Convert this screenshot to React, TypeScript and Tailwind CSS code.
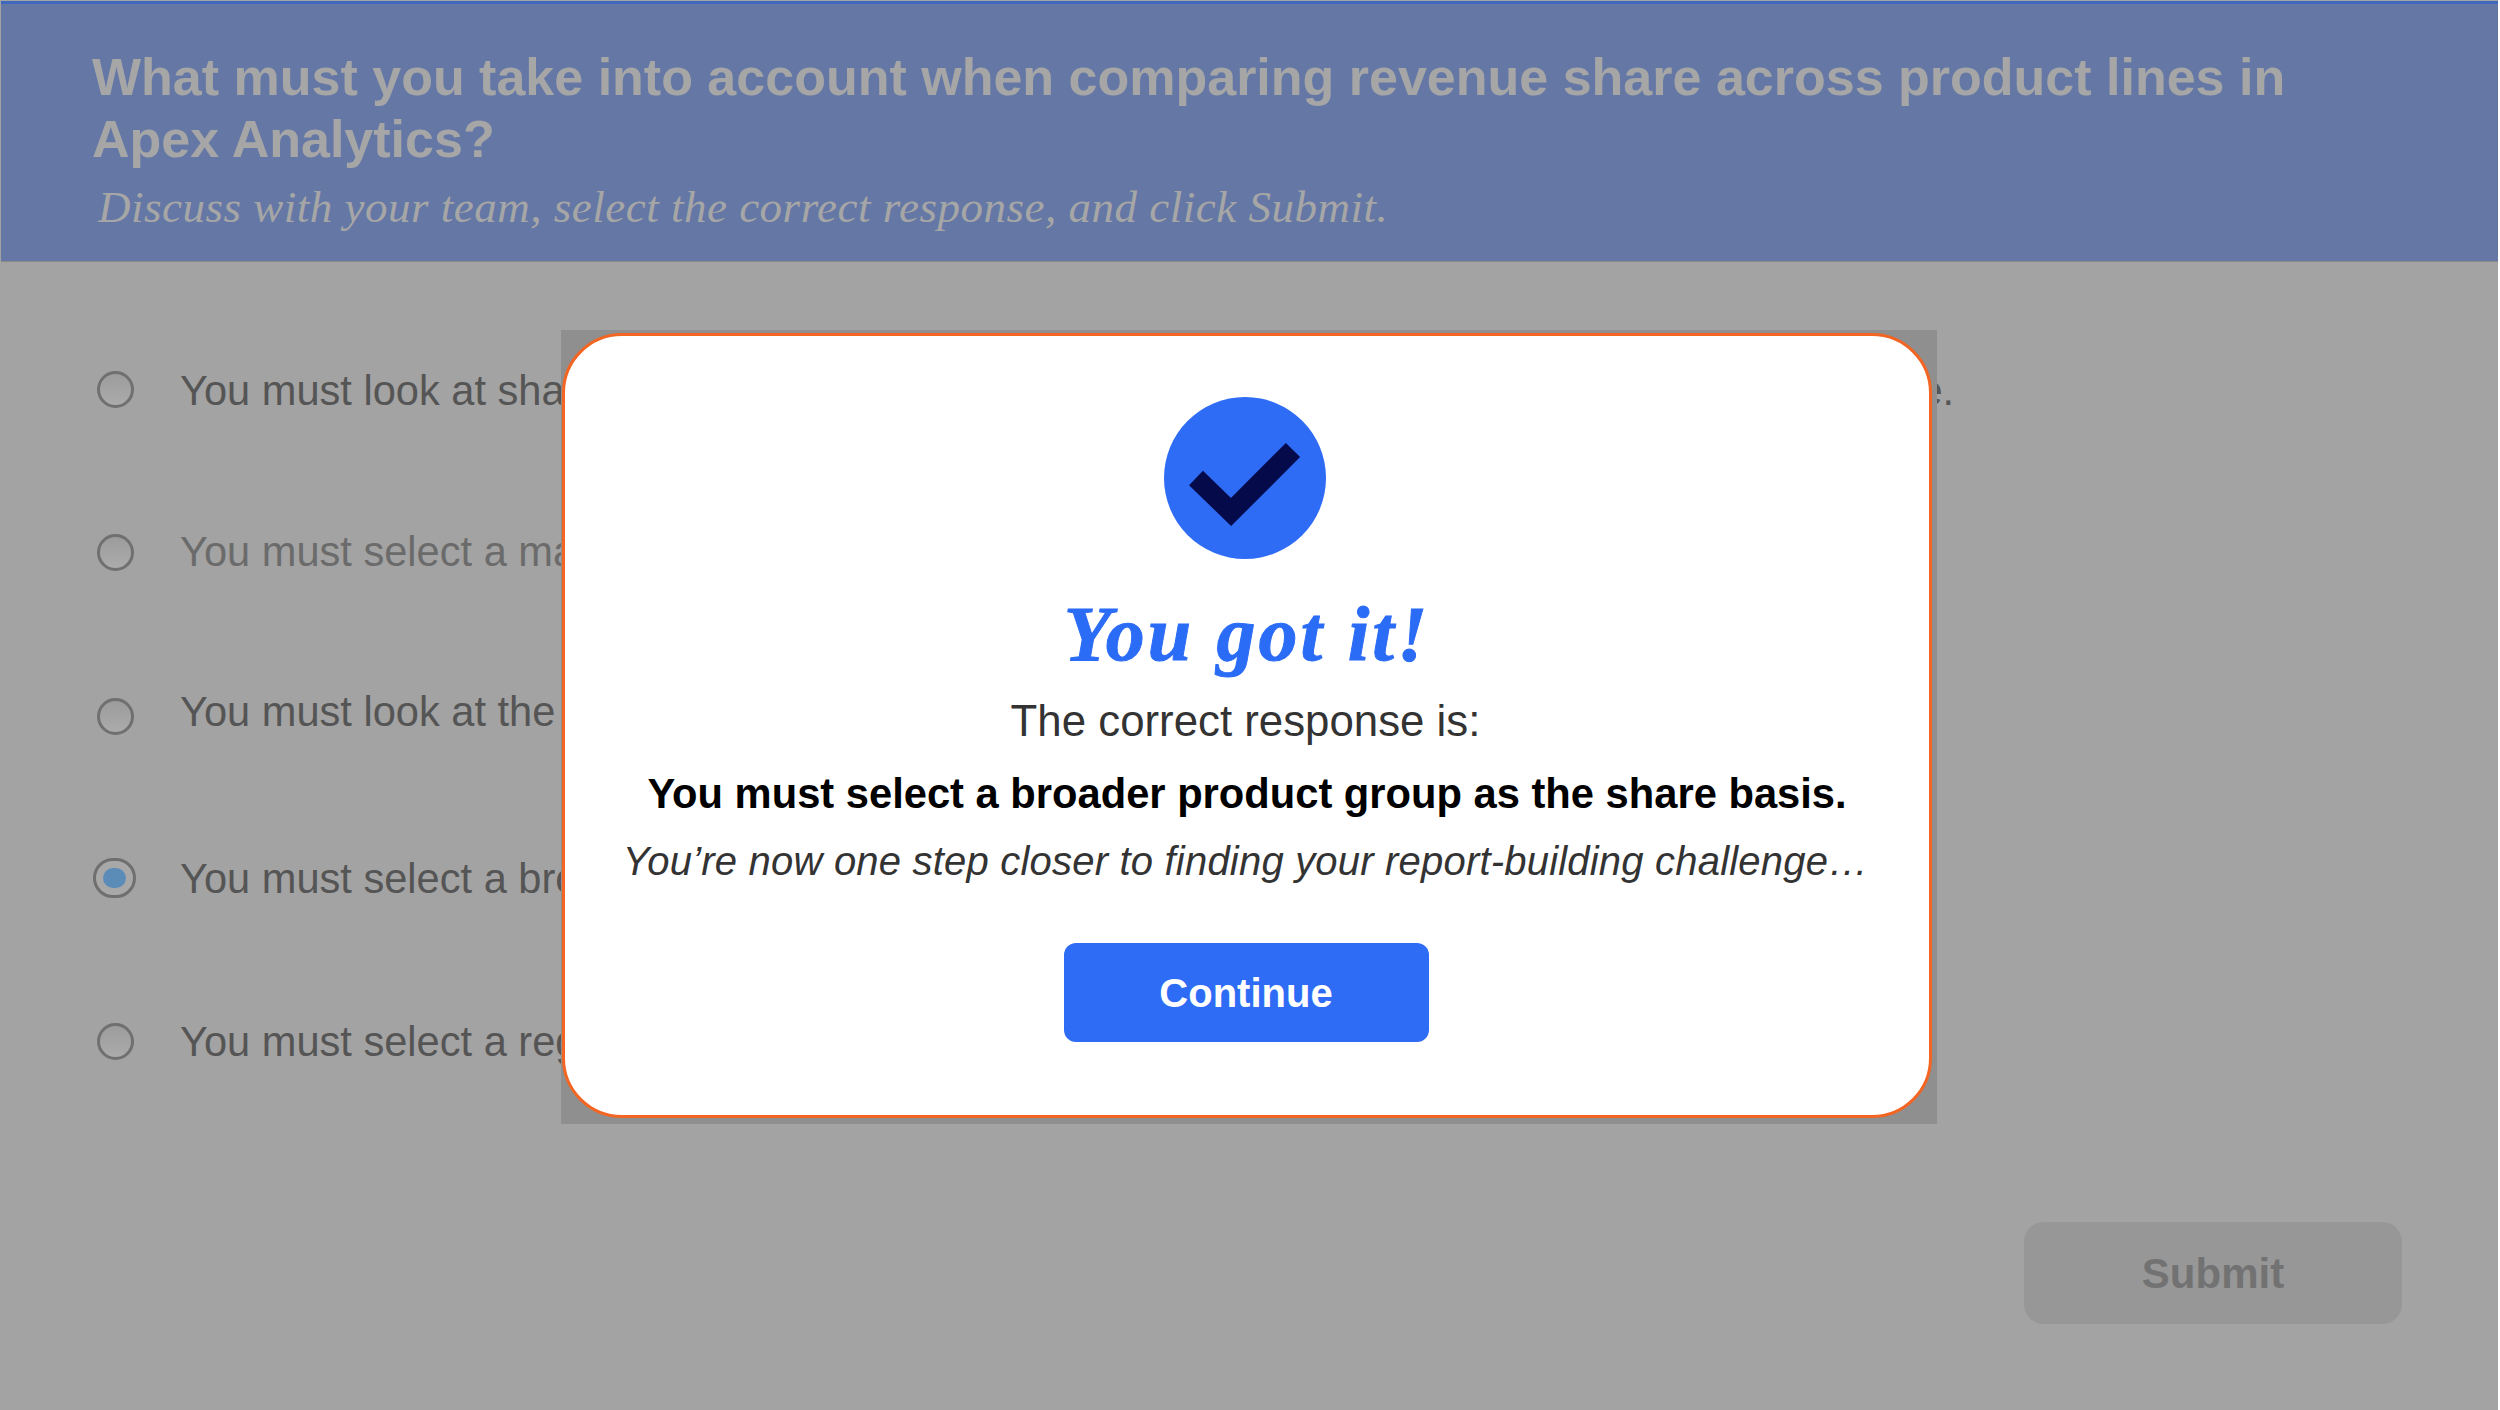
const options = [
  { text: "You must look at share values for each product line across the same time frame and data scope.", row: "mt-[109px]", radio: "-mt-[4px]", tone: "text-[#555555]" },
  { text: "You must select a matching measure and sort the product lines by their highest value.", row: "mt-[121px]", radio: "mt-0", tone: "text-[#6b6b6b]" },
  { text: "You must look at the total revenue for every product line in the report.", row: "mt-[120px]", radio: "mt-[8px]", tone: "text-[#555555]" },
  { text: "You must select a broader product group as the share basis.", row: "mt-[127px]", radio: "-mt-[2px]", tone: "text-[#555555]", selected: true },
  { text: "You must select a regional filter before comparing the share values.", row: "mt-[123px]", radio: "-mt-[2px]", tone: "text-[#555555]" },
];

function Radio({ selected, className }: { selected?: boolean; className: string }) {
  if (selected) {
    return (
      <span className={`flex h-[40px] w-[43px] -ml-[4px] mr-[44px] shrink-0 items-center justify-center rounded-full border-[3px] border-[#6f6f6f] bg-[#a8a8a8] ${className}`}>
        <span className="block h-[20px] w-[23px] rounded-full bg-[#5b8cb8]" />
      </span>
    );
  }
  return (
    <span className={`block h-[37px] w-[37px] mr-[46px] shrink-0 rounded-full border-[3px] border-[#707070] bg-gradient-to-b from-[#9c9c9c] to-[#ababab] ${className}`} />
  );
}

export default function App() {
  return (
    <div className="relative h-[1410px] w-[2500px] overflow-hidden border-r-2 border-white bg-[#a3a3a3] font-['Liberation_Sans',Arial,sans-serif]">
      <div className="ml-px mt-px flex h-[1409px] flex-col">
        <header className="h-[261px] shrink-0 border-t-[3px] border-b-[1px] border-t-[#3f69bd] border-b-[#8a8a8a] bg-[#6578a5] pl-[91px] pt-[42px]">
          <h1 className="w-[2300px] text-[52px] font-bold leading-[62px] text-[#a6a6a6]">
            What must you take into account when comparing revenue share across product lines in Apex Analytics?
          </h1>
          <p className="mt-[12px] ml-[6px] font-['Liberation_Serif',serif] text-[45px] italic leading-[50px] tracking-[0.5px] text-[#a6a6a6]">
            Discuss with your team, select the correct response, and click Submit.
          </p>
        </header>

        <main className="flex-1 pl-[96px]">
          {options.map((o) => (
            <div key={o.text} className={`flex h-[40px] items-center ${o.row}`}>
              <Radio selected={o.selected} className={o.radio} />
              <span className={`whitespace-nowrap text-[41.6px] leading-[40px] ${o.tone}`}>{o.text}</span>
            </div>
          ))}
          <div className="mr-[96px] mt-[160px] flex justify-end">
            <button className="h-[102px] w-[378px] rounded-[20px] bg-[#979797] text-[42px] font-bold text-[#727272]">
              Submit
            </button>
          </div>
        </main>
      </div>

      <div className="absolute left-[561px] top-[330px] bg-[#8f8f8f] pb-[6px] pl-px pr-[5px] pt-[3px]">
        <div className="flex h-[785px] w-[1370px] flex-col items-center rounded-[60px] border-[3px] border-[#f26522] bg-white pr-[3px]">
          <div className="-ml-[2px] mt-[61px] flex h-[162px] w-[162px] items-center justify-center rounded-full bg-[#2f6cf6]">
            <svg width="162" height="162" viewBox="0 0 162 162">
              <polyline points="32,81 67,115 129,53" fill="none" stroke="#040a4a" strokeWidth="20" strokeLinejoin="miter" />
            </svg>
          </div>
          <h2 className="mt-[35px] pl-[3px] font-['Liberation_Serif',serif] text-[78px] font-bold italic leading-[80px] tracking-[3px] text-[#2b6cf6] [-webkit-text-stroke:1px_#2b6cf6]">
            You got it!
          </h2>
          <p className="mt-[22px] text-[43.8px] leading-[50px] text-[#333333]">The correct response is:</p>
          <p className="mt-[24px] pl-[3px] text-[41.7px] font-bold leading-[48px] text-black">
            You must select a broader product group as the share basis.
          </p>
          <p className="mt-[20px] text-[40px] italic leading-[46px] tracking-[0.2px] text-[#333333]">
            You’re now one step closer to finding your report-building challenge…
          </p>
          <button className="mt-[59px] ml-px h-[99px] w-[365px] rounded-[12px] bg-[#2f6cf6] text-[40px] font-bold text-white">
            Continue
          </button>
        </div>
      </div>
    </div>
  );
}
